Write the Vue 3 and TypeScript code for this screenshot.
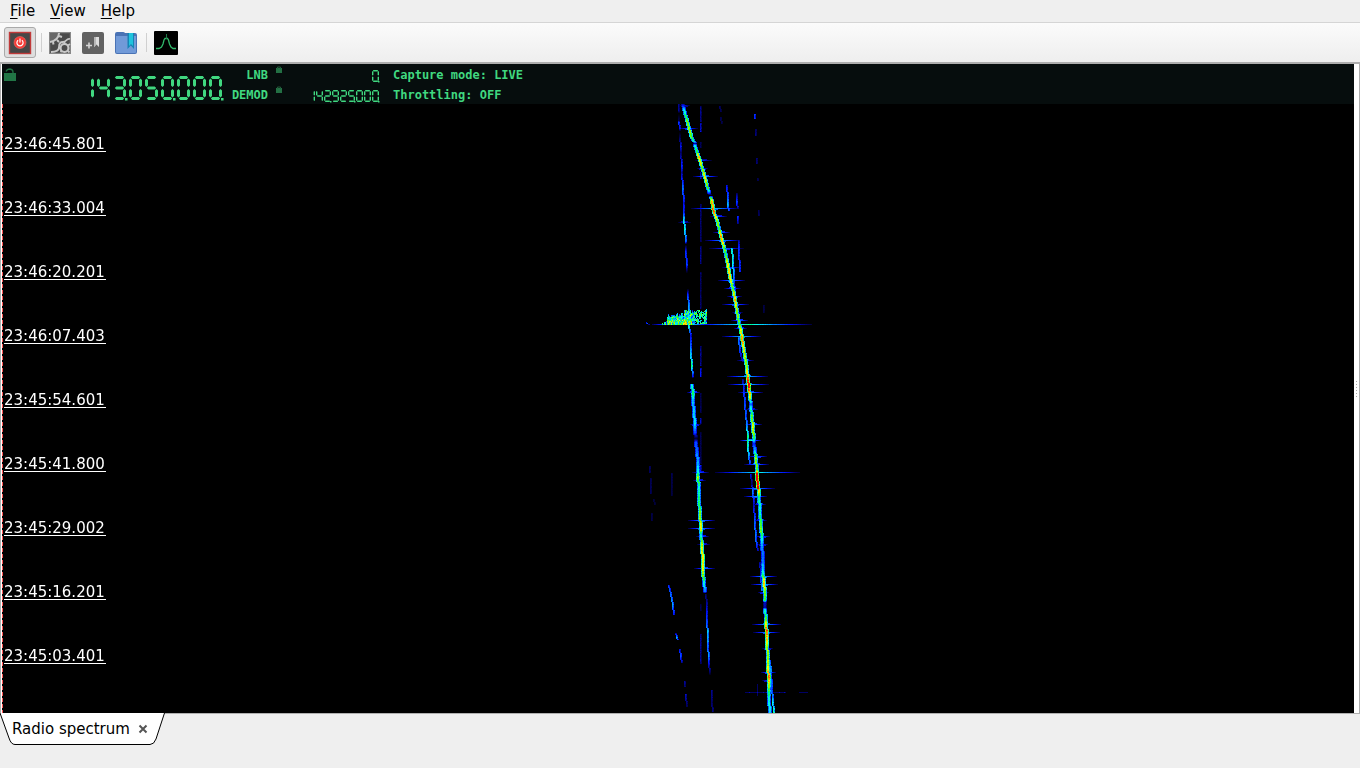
<script setup lang="ts">
import { onMounted, ref } from 'vue'

const menus = [
  { key: 'F', rest: 'ile' },
  { key: 'V', rest: 'iew' },
  { key: 'H', rest: 'elp' },
]

const stamps = [
  '23:46:45.801', '23:46:33.004', '23:46:20.201',
  '23:46:07.403', '23:45:54.601', '23:45:41.800',
  '23:45:29.002', '23:45:16.201', '23:45:03.401',
]

/* Seven segment readouts: which of the segments a..g are lit per digit */
const SEGMENTS: Record<string, string> = {
  '0': 'abcdef', '1': 'bc', '2': 'abdeg', '3': 'abcdg', '4': 'bcfg',
  '5': 'acdfg', '6': 'acdefg', '7': 'abc', '8': 'abcdefg', '9': 'abcdfg',
}

function readout(text: string, w: number, h: number, t: number, pitch: number): string {
  const m = h / 2
  const i = t / 2
  const g = t * 0.6
  const e = t * 0.3
  const dot = Math.max(t * 0.85, 1.5)
  const out: string[] = []
  const horizontal = (x: number, y: number) =>
    out.push(`M${x + g} ${y}L${x + g + i} ${y - i}H${x + w - g - i}L${x + w - g} ${y}L${x + w - g - i} ${y + i}H${x + g + i}Z`)
  const vertical = (x: number, y1: number, y2: number) =>
    out.push(`M${x} ${y1}L${x + i} ${y1 + i}V${y2 - i}L${x} ${y2}L${x - i} ${y2 - i}V${y1 + i}Z`)
  let x = 1
  for (const ch of text) {
    if (ch === '.') {
      out.push(`M${x - pitch + w - 1} ${h - dot + 0.5}h${dot}v${dot}h${-dot}Z`)
      continue
    }
    const on = SEGMENTS[ch] ?? ''
    if (on.includes('a')) horizontal(x, i)
    if (on.includes('g')) horizontal(x, m)
    if (on.includes('d')) horizontal(x, h - i)
    if (on.includes('f')) vertical(x + i, i + e, m - e)
    if (on.includes('b')) vertical(x + w - i, i + e, m - e)
    if (on.includes('e')) vertical(x + i, m + e, h - i - e)
    if (on.includes('c')) vertical(x + w - i, m + e, h - i - e)
    x += pitch
  }
  return out.join('')
}

const mainDigits = readout('143.050.000.', 13, 24, 3, 16)
const demodDigits = readout('142.925.000.', 7, 12, 1.4, 8)
const lnbDigits = readout('0.', 7, 12, 1.4, 8)

/* Waterfall */
const WIDTH = 1352
const HEIGHT = 609
const canvas = ref<HTMLCanvasElement | null>(null)

/* x, y, level; a track is a chain of such points */
type Point = [number, number, number]
interface Track { core: number; points: Point[] }

const tracks: Track[] = [
  {
    core: 1,
    points: [
      [681, 0, 0.16], [682, 5, 0.45], [684, 12, 0.6], [686, 20, 0.66], [688, 27, 0.7], [690, 34, 0.6],
      [692, 37, 0.55], [693, 39, 0.15], [693, 41, 0.5], [695, 47, 0.6], [697, 53, 0.82], [700, 63, 0.65],
      [703, 73, 0.78], [706, 84, 0.6], [707, 88, 0.35], [708, 91, 0], [709, 93, 0.6], [710, 97, 0.85],
      [712, 108, 0.9], [715, 116, 0.68], [717, 124, 0.62], [719, 132, 0.86], [720, 136, 0.88],
      [722, 142, 0.68], [724, 151, 0.6], [726, 161, 0.78], [728, 173, 0.8], [731, 184, 0.6],
      [733, 194, 0.85], [734, 201, 0.74], [737, 218, 0.6], [739, 226, 0.75], [740, 234, 0.9],
      [742, 246, 0.72], [744, 258, 0.7], [745, 264, 0.7], [746, 275, 0.96], [747, 282, 0.98],
      [748, 293, 0.75], [749, 300, 0.32], [749, 303, 0.5], [750, 312, 0.64], [751, 323, 0.74],
      [752, 334, 0.6], [752, 339, 0.24], [753, 346, 0.42], [754, 354, 0.7], [755, 365, 0.64],
      [755, 369, 0.99], [756, 384, 1], [757, 386, 0.8], [757, 393, 0.55], [758, 405, 0.5],
      [759, 425, 0.66], [760, 432, 0.55], [760, 441, 0.4], [761, 453, 0.32], [761, 468, 0.5],
      [762, 478, 0.85], [763, 488, 0.66], [763, 496, 0.6], [763, 498, 0.16], [763, 503, 0.16],
      [763, 505, 0.5], [764, 514, 0.62], [764, 521, 0.85], [765, 528, 0.92], [765, 539, 0.76],
      [766, 553, 0.66], [766, 565, 0.8], [767, 573, 0.92], [767, 584, 0.64], [767, 595, 0.5], [768, 609, 0.45],
    ],
  },
  {
    core: 0,
    points: [
      [676, 0, 0.13], [676, 6, 0.14], [676, 9, 0], [676, 16, 0.08], [676, 18, 0.28], [677, 24, 0.2],
      [677, 27, 0], [677, 34, 0.1], [678, 42, 0.2], [678, 48, 0.1], [679, 61, 0.25], [679, 68, 0.14],
      [680, 84, 0.35], [681, 98, 0.2], [681, 108, 0.25], [681, 115, 0.45], [682, 124, 0.5],
      [683, 137, 0.32], [683, 140, 0], [683, 147, 0.25], [684, 160, 0.27], [684, 169, 0],
      [685, 184, 0], [685, 190, 0.25], [686, 202, 0.4], [686, 222, 0.5],
      [688, 231, 0.2], [688, 247, 0.4], [689, 262, 0.55], [690, 272, 0.23], [690, 274, 0],
    ],
  },
  {
    core: 1,
    points: [
      [690, 280, 0.5], [691, 289, 0.58], [691, 296, 0.42], [693, 320, 0.47], [693, 328, 0.28],
      [694, 334, 0.05], [694, 338, 0.28], [696, 357, 0.4], [696, 367, 0.5], [696, 373, 0.7],
      [697, 383, 0.5], [697, 394, 0.55], [698, 410, 0.64], [699, 424, 0.8], [699, 430, 0.48],
      [700, 441, 0.74], [701, 459, 0.78], [701, 466, 0.75], [702, 479, 0.5], [703, 487, 0.36], [703, 489, 0],
    ],
  },
  {
    core: 0,
    points: [
      [703, 490, 0.1], [704, 500, 0.15], [704, 520, 0.32], [705, 528, 0.44], [705, 545, 0.32],
      [706, 551, 0.4], [706, 560, 0.18], [707, 568, 0.1], [707, 571, 0],
    ],
  },
  { core: 0, points: [[709, 586, 0.14], [709, 597, 0.1], [710, 608, 0.12]] },
  { core: 0, points: [[666, 481, 0.25], [668, 490, 0.32], [670, 500, 0.4], [671, 511, 0.2]] },
  { core: 0, points: [[673, 529, 0.15], [674, 533, 0.4], [675, 536, 0.28]] },
  { core: 0, points: [[677, 545, 0.2], [678, 552, 0.3], [679, 559, 0.12]] },
  { core: 0, points: [[682, 577, 0.14], [682, 583, 0.1]] },
  { core: 0, points: [[683, 590, 0.18], [684, 603, 0.08]] },
  { core: 0, points: [[724, 81, 0.2], [725, 95, 0.32], [725, 100, 0.42], [726, 107, 0.25]] },
  { core: 0, points: [[734, 89, 0.1], [734, 98, 0.28], [735, 105, 0.1]] },
  { core: 0, points: [[735, 112, 0.25], [735, 120, 0.12]] },
  { core: 0, points: [[729, 144, 0.5], [730, 155, 0.52], [731, 175, 0.34], [733, 200, 0.12], [735, 214, 0.1]] },
  { core: 0, points: [[736, 136, 0.15], [736, 144, 0.25], [737, 168, 0.25]] },
  { core: 0, points: [[736, 234, 0.38], [737, 247, 0.25], [740, 258, 0.1]] },
  { core: 0, points: [[740, 275, 0.15], [741, 285, 0.25], [742, 300, 0.28], [744, 321, 0.36], [745, 332, 0.6], [745, 344, 0.5], [747, 360, 0.27]] },
  { core: 0, points: [[748, 370, 0.2], [749, 380, 0.1], [750, 386, 0.38], [751, 400, 0.16], [752, 417, 0.32], [753, 435, 0.35], [755, 447, 0.15]] },
  { core: 0, points: [[757, 458, 0.14], [758, 470, 0.2], [759, 487, 0.38]] },
  { core: 0, points: [[766, 553, 0.3], [768, 565, 0.4], [769, 585, 0.3], [770, 595, 0.42], [771, 609, 0.55]] },
  { core: 0, points: [[752, 10, 0.25], [752, 15, 0.25]] },
  { core: 0, points: [[753, 25, 0.09], [753, 32, 0.13]] },
  { core: 0, points: [[754, 54, 0.11], [754, 60, 0.11]] },
  { core: 0, points: [[755, 74, 0.08], [755, 77, 0.08]] },
  { core: 0, points: [[756, 106, 0.09], [756, 112, 0.09]] },
  { core: 0, points: [[717, 2, 0.1], [718, 8, 0.08]] },
  { core: 0, points: [[718, 13, 0.08], [719, 20, 0.07]] },
  { core: 0, points: [[761, 201, 0.07], [761, 209, 0.07]] },
  { core: 0, points: [[647, 362, 0.09], [647, 369, 0.09]] },
  { core: 0, points: [[648, 374, 0.08], [648, 390, 0.09]] },
  { core: 0, points: [[651, 395, 0.06], [652, 401, 0.06]] },
  { core: 0, points: [[649, 409, 0.07], [649, 417, 0.07]] },
  { core: 0, points: [[669, 369, 0.08], [669, 392, 0.06]] },
]

/* y ranges and level of the carrier line at x = 698 */
const carrier: Point[] = [
  [2, 18, 0.15], [19, 28, 0.2], [38, 44, 0.1], [53, 60, 0.13], [68, 75, 0.17], [100, 138, 0.12],
  [142, 160, 0.14], [168, 205, 0.11], [242, 262, 0.14], [264, 273, 0.22], [289, 309, 0.09],
  [314, 320, 0.17], [328, 360, 0.09], [361, 369, 0.22], [500, 507, 0.08], [530, 560, 0.14],
]

/* centre x, y, half width, level of the horizontal smears */
const smears: [number, number, number, number][] = [
  [686, 24, 9, 0.3], [701, 56, 8, 0.2], [700, 64, 5, 0.25], [703, 72, 12, 0.38],
  [712, 104, 23, 0.42], [716, 112, 8, 0.28], [719, 128, 8, 0.3], [720, 136, 17, 0.38],
  [724, 144, 17, 0.3], [729, 163, 9, 0.27], [729, 176, 13, 0.38], [730, 184, 8, 0.3],
  [732, 192, 7, 0.3], [733, 200, 13, 0.36], [735, 208, 5, 0.22], [737, 216, 8, 0.35],
  [747, 220, 62, 0.52], [680, 220, 30, 0.6], [738, 224, 6, 0.3], [739, 232, 19, 0.42],
  [743, 256, 8, 0.28], [745, 272, 20, 0.43], [746, 280, 20, 0.43], [748, 288, 12, 0.38],
  [682, 118, 6, 0.2], [691, 288, 6, 0.34], [693, 320, 5, 0.28], [749, 305, 6, 0.25],
  [751, 320, 8, 0.35], [748, 336, 10, 0.5], [755, 352, 9, 0.33], [754, 360, 12, 0.36],
  [755, 368, 42, 0.47], [755, 384, 17, 0.38], [753, 392, 11, 0.38], [757, 400, 6, 0.28],
  [698, 368, 8, 0.28], [697, 376, 6, 0.26], [699, 416, 13, 0.38], [699, 424, 13, 0.37],
  [700, 432, 6, 0.29], [701, 440, 6, 0.25], [702, 464, 10, 0.36], [758, 416, 6, 0.27],
  [760, 432, 7, 0.3], [760, 440, 5, 0.25], [761, 472, 13, 0.4], [762, 480, 13, 0.4],
  [761, 488, 5, 0.28], [764, 520, 14, 0.4], [764, 528, 13, 0.37], [765, 544, 5, 0.25],
  [766, 568, 7, 0.36], [765, 576, 5, 0.25], [682, 1, 5, 0.18],
]

const ramp: [number, number, number, number][] = [
  [0, 0, 0, 0], [0.1, 0, 0, 100], [0.22, 0, 20, 255], [0.36, 0, 130, 255], [0.48, 0, 245, 245],
  [0.58, 0, 255, 100], [0.66, 120, 255, 0], [0.78, 250, 250, 0], [0.88, 255, 150, 0], [0.96, 255, 20, 0], [1, 240, 0, 0],
]

function colour(v: number): [number, number, number] {
  for (let i = 1; i < ramp.length; i++) {
    const a = ramp[i - 1]
    const b = ramp[i]
    if (v <= b[0]) {
      const t = (v - a[0]) / (b[0] - a[0])
      return [a[1] + (b[1] - a[1]) * t, a[2] + (b[2] - a[2]) * t, a[3] + (b[3] - a[3]) * t]
    }
  }
  return [240, 0, 0]
}

let seed = 20177
function random(): number {
  seed = (seed * 1103515245 + 12345) & 0x7fffffff
  return ((seed >> 8) & 0xffff) / 0xffff
}

function drawWaterfall(target: HTMLCanvasElement) {
  const ctx = target.getContext('2d')
  if (!ctx) return
  const level = new Float32Array(WIDTH * HEIGHT)
  const put = (x: number, y: number, v: number) => {
    const px = Math.round(x)
    if (px < 0 || px >= WIDTH || y < 0 || y >= HEIGHT) return
    const at = y * WIDTH + px
    level[at] = Math.max(level[at], Math.min(v, 1))
  }

  for (const [cx, y, half, v] of smears) {
    for (let dx = -half; dx <= half; dx++) {
      const fall = 1 - Math.abs(dx) / (half + 1)
      put(cx + dx, y, v * (0.12 + 0.98 * fall) * (0.9 + 0.1 * random()))
      if (Math.abs(dx) < 4 && half < 30) put(cx + dx, y + (half % 2 ? 1 : -1), v * 0.7)
    }
  }
  for (const [from, to, v] of carrier) {
    for (let y = from; y < to; y++) {
      put(698, y, v * (0.7 + 0.4 * random()))
      put(699, y, v * (0.3 + 0.4 * random()))
    }
  }
  for (const track of tracks) {
    for (let i = 1; i < track.points.length; i++) {
      const [x1, y1, v1] = track.points[i - 1]
      const [x2, y2, v2] = track.points[i]
      for (let y = y1; y < y2; y++) {
        const t = (y - y1) / (y2 - y1)
        const v = (v1 + (v2 - v1) * t) * (0.94 + 0.12 * random())
        const x = Math.round(x1 + (x2 - x1) * t) - (track.core ? 1 : 0)
        put(x, y, v)
        if (track.core) {
          put(x + 1, y, v * (0.92 + 0.1 * random()))
          put(x - 1, y, v * (0.5 + 0.3 * random()))
          put(x + 2, y, v * (0.45 + 0.3 * random()))
        } else {
          put(x + 1, y, v * (0.6 + 0.4 * random()))
        }
      }
    }
  }
  /* Meteor echo: a ragged burst, densest at its lower left */
  const burst = new Float32Array(46 * 20)
  for (let i = 0; i < burst.length; i++) burst[i] = random()
  for (let x = 660; x < 705; x++) {
    const ridge = x < 665 ? 218 - (x - 660) : x < 672 ? 210 : x < 682 ? 209 : x < 687 ? 205 : x < 696 ? 206 : 205
    const top = ridge + Math.floor(random() * 4)
    for (let y = top; y < 221; y++) {
      const at = (x - 660) * 20 + (y - 203)
      const grain = (burst[at] + burst[at + 1]) / 2
      const depth = (y - top) / 16
      const hole = x > 692 && x < 703 && grain < 0.4
      const base = x < 690 ? 0.42 + depth * 0.22 : 0.42
      if (!hole && !(x > 690 && y > 219)) put(x, y, base + (grain - 0.42) * 0.6)
    }
  }
  for (const [x, y, v] of [[644, 218, 0.2], [645, 219, 0.3], [644, 219, 0.2], [647, 220, 0.14], [646, 220, 0.12]] as Point[]) put(x, y, v)
  for (let x = 743; x < 806; x++) if (x < 784 || x > 796) put(x, 588, 0.1 + (random() > 0.85 ? 0.06 : 0))
  for (let y = 580; y < 592; y++) put(755, y, 0.1)

  const image = ctx.createImageData(WIDTH, HEIGHT)
  for (let i = 0; i < level.length; i++) {
    const [r, g, b] = colour(level[i])
    image.data.set([r, g, b, 255], i * 4)
  }
  ctx.putImageData(image, 0, 0)
}

onMounted(() => {
  if (canvas.value) drawWaterfall(canvas.value)
})
</script>

<template>
  <div class="window">
    <nav class="menubar" aria-label="Main menu">
      <button v-for="m in menus" :key="m.key" class="menu" type="button"><u>{{ m.key }}</u>{{ m.rest }}</button>
    </nav>

    <div class="toolbar" role="toolbar" aria-label="Capture tools">
      <button class="tool pressed" type="button" aria-label="Start capture" aria-pressed="true">
        <svg viewBox="0 0 24 24">
          <rect x="1.5" y="1.5" width="21" height="21" fill="#474747" stroke="#c03a3a" stroke-width="1.4" />
          <circle cx="12" cy="11.500" r="6" fill="#f53b36" stroke="#ff7770" stroke-width=".5" />
          <path d="M10.1 9.300a3.100 3.100 0 1 0 3.800 0" fill="none" stroke="#fff" stroke-width="1.200" />
          <path d="M12 7.500v4" stroke="#fff" stroke-width="1.200" />
        </svg>
      </button>
      <span class="separator"></span>
      <button class="tool" type="button" aria-label="Settings">
        <svg viewBox="0 0 24 24">
          <rect x="1.500" y="1.500" width="21" height="21" fill="#585858" stroke="#888" />
          <rect x="3" y="3" width="18" height="18" fill="#4b4b4b" />
          <path d="M2 2h8q0 7-8 8z" fill="#686868" />
          <g fill="none" stroke="#c8c8c8">
            <path d="M11 2Q10.500 9.500 2 11" stroke-width="2" />
            <path d="M11 5l3 1M9 9l2 2M5 11l.5 2.500" stroke-width="2" />
            <circle cx="16.500" cy="17" r="4" stroke-width="2.200" />
            <path d="M22 8c-4-1-3 3-7 3-3 0-4 2-4 5s-3 5-8 5" stroke-width="1.800" />
            <path d="M16.500 11v3M12 17h-2M22 13l-2 1.500M12.500 21l1-1M20 20l1.500 1.500" stroke-width="1.800" />
          </g>
        </svg>
      </button>
      <button class="tool" type="button" aria-label="Add bookmark">
        <svg viewBox="0 0 24 24">
          <rect x="1" y="1" width="22" height="22" rx="2" fill="#626262" />
          <path d="M13 6h5v10l-2.500-2.500L13 16z" fill="#dcdcdc" />
          <path d="M13 6h2v7.500L13 16z" fill="#b7b7b7" />
          <path d="M5 14.500h6M8 11.500v6" stroke="#d5d5d5" stroke-width="1.600" />
        </svg>
      </button>
      <button class="tool" type="button" aria-label="Bookmarks">
        <svg viewBox="0 0 24 24">
          <path d="M1 3q0-2 2-2h6q1.500 0 2 1h10q2 0 2 2v17q0 2-2 2H3q-2 0-2-2z" fill="#4a73b5" />
          <path d="M2 5h20v16q0 1-1 1H3q-1 0-1-1z" fill="#719ad8" />
          <path d="M13.500 2H20v16l-3.250-3.500L13.500 18z" fill="#1684b4" />
          <path d="M15 2h4v13l-2-2-2 2z" fill="#1fc3dd" />
        </svg>
      </button>
      <span class="separator"></span>
      <button class="tool" type="button" aria-label="Radio spectrum">
        <svg viewBox="0 0 24 24">
          <rect width="24" height="24" rx="1" fill="#000" />
          <path d="M2 17.500h3l2.500-1.500 1.500-3 1-4 1-1.500h2.500l1 1.500 1 4 1.500 3 2 1.500h3" fill="none" stroke="#31b96b" stroke-width="1.300" />
          <path d="M12.500 3v5" stroke="#1e7a46" />
        </svg>
      </button>
    </div>

    <main class="pane">
      <section class="viewer">
        <header class="panel">
          <svg class="unlock" viewBox="0 0 12 14" role="img" aria-label="Frequency unlocked">
            <path d="M2 3.500Q3 1 6 1q3 .5 3 3v2" fill="none" stroke="#1f6e40" stroke-width="1.300" />
            <path d="M0 5h12v8H0z" fill="#217545" />
          </svg>
          <svg class="main-digits" viewBox="0 0 144 24" role="img" aria-label="143.050.000"><path :d="mainDigits" /></svg>
          <div class="labels"><span>LNB</span><span>DEMOD</span></div>
          <div class="locks">
            <svg v-for="n in 2" :key="n" viewBox="0 0 6 7" role="img" aria-label="Locked">
              <path d="M0 2h6v5H0z" fill="#237044" />
              <path d="M1.500 3V1h3v2" fill="none" stroke="#205c3b" />
            </svg>
          </div>
          <div class="small-digits">
            <svg viewBox="0 0 72 12" role="img" aria-label="0"><path :d="lnbDigits" transform="translate(64 0)" /></svg>
            <svg viewBox="0 0 72 12" role="img" aria-label="142.925.000"><path :d="demodDigits" /></svg>
          </div>
          <div class="status"><span>Capture mode: LIVE</span><span>Throttling: OFF</span></div>
        </header>
        <div class="waterfall">
          <canvas ref="canvas" :width="WIDTH" :height="HEIGHT"></canvas>
          <ol class="stamps">
            <li v-for="s in stamps" :key="s"><span>{{ s }}</span></li>
          </ol>
        </div>
      </section>
      <div class="splitter"><i v-for="n in 6" :key="n"></i></div>
    </main>

    <footer class="tabs">
      <div class="tab">
        <svg class="tab-shape" viewBox="0 0 165 32" aria-hidden="true">
          <path d="M0 0L9 25Q11 31.500 15 31.500H150Q154 31.500 156 26L164.500 0" fill="#fff" stroke="#000" />
        </svg>
        <button class="tab-name" type="button">Radio spectrum</button>
        <button class="tab-close" type="button" aria-label="Close tab">
          <svg viewBox="0 0 10 10"><path d="M1.500 1.500l7 7M8.500 1.500l-7 7" stroke="#555" stroke-width="2" /></svg>
        </button>
      </div>
    </footer>
  </div>
</template>

<style>
html, body { margin: 0; background: #efefef; }
</style>

<style scoped>
.window {
  display: flex;
  flex-direction: column;
  height: 100vh;
  overflow: hidden;
  background: #efefef;
  color: #000;
  font: 15px/18px "DejaVu Sans", sans-serif;
}
button {
  margin: 0;
  padding: 0;
  border: 0;
  background: none;
  color: inherit;
  font: inherit;
}
svg { display: block; }

.menubar {
  display: flex;
  gap: 15px;
  height: 22px;
  padding-left: 10px;
  border-bottom: 1px solid #d5d5d5;
}
.menu { height: 22px; }
.menu u { text-underline-offset: 2px; text-decoration-thickness: 1px; }

.toolbar {
  display: flex;
  align-items: center;
  height: 39px;
  padding-left: 4px;
  background: linear-gradient(#fbfbfb, #eeeeee);
}
.tool { width: 24px; margin-right: 9px; }
.tool svg { width: 24px; height: 24px; }
.tool.pressed {
  box-sizing: border-box;
  width: 32px;
  height: 31px;
  margin-right: 5px;
  padding: 2px 3px;
  border: 1px solid #a9a9a9;
  border-radius: 3px;
  background: #dedede;
}
.separator {
  width: 1px;
  height: 19px;
  margin-right: 6px;
  background: #d0d0d0;
}
.separator:last-of-type { margin-left: -1px; margin-right: 7px; }

.pane {
  display: flex;
  flex: 1;
  min-height: 0;
  padding-left: 1px;
  border: solid #adadad;
  border-width: 2px 1px 1px;
  border-bottom-color: #b0b0b0;
  background: #fff;
}
.viewer {
  display: flex;
  flex: 1;
  flex-direction: column;
  min-width: 0;
}
.panel {
  display: flex;
  align-items: flex-start;
  box-sizing: border-box;
  height: 40px;
  background: #060d0d;
  color: #40d880;
  font: bold 12px/20px "DejaVu Sans Mono", monospace;
}
.unlock { width: 12px; height: 14px; margin: 4px 0 0 2px; }
.main-digits { width: 144px; height: 24px; margin: 12px 0 0 64px; fill: #40d880; }
.main-digits, .small-digits svg { overflow: visible; }
.labels {
  display: flex;
  flex-direction: column;
  width: 44px;
  text-align: right;
}
.labels, .status { padding-top: 1px; }
.locks {
  display: flex;
  flex-direction: column;
  gap: 13px;
  padding: 2px 0 0 8px;
}
.locks svg { width: 6px; height: 7px; }
.small-digits {
  display: flex;
  flex-direction: column;
  gap: 8px;
  padding: 6px 0 0 25px;
}
.small-digits svg { width: 72px; height: 12px; fill: #40d880; }
.status {
  display: flex;
  flex-direction: column;
  padding-left: 14px;
}

.waterfall {
  position: relative;
  flex: 1;
  min-height: 0;
  background: #000;
}
.waterfall::before {
  content: "";
  position: absolute;
  z-index: 1;
  inset: 0 auto 0 0;
  width: 1px;
  background: repeating-linear-gradient(#ff5a5a 0 4px, #000 4px 6px);
}
.waterfall canvas {
  display: block;
  position: absolute;
  width: 100%;
  height: 100%;
  object-fit: cover;
}
.stamps {
  position: absolute;
  inset: 30px auto 0 2px;
  margin: 0;
  padding: 0;
  color: #fff;
  line-height: 20px;
  list-style: none;
}
.stamps li {
  box-sizing: border-box;
  width: 102px;
  height: 18px;
  margin-bottom: 46px;
  border-bottom: 1px solid #fff;
}

.splitter {
  display: flex;
  flex-direction: column;
  align-items: center;
  justify-content: center;
  gap: 2px;
  width: 5px;
}
.splitter i { width: 1px; height: 1px; background: #a8a8a8; }

.tabs { height: 54px; }
.tab {
  display: flex;
  position: relative;
  align-items: center;
  gap: 8px;
  width: 153px;
  height: 31px;
  margin-top: -1px;
  padding-left: 12px;
}
.tab-shape {
  position: absolute;
  inset: 0 auto auto 0;
  width: 165px;
  height: 32px;
}
.tab-name, .tab-close { position: relative; }
.tab-close svg { width: 10px; height: 10px; }
</style>
